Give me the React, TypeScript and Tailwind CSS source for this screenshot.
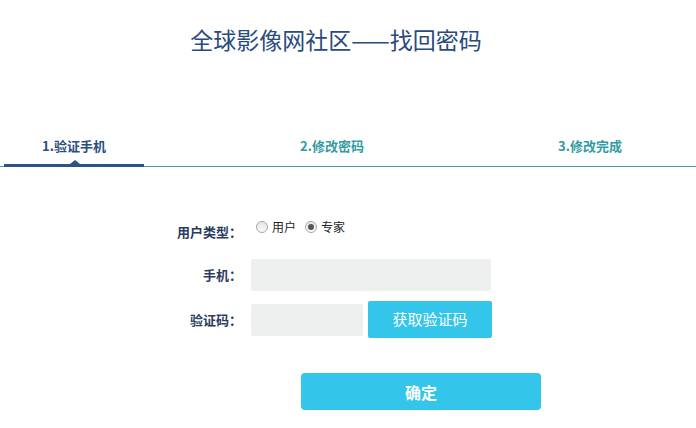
import React from "react";

const font = { fontFamily: '"Noto Sans CJK SC", "Noto Sans", sans-serif' };

function Radio({ checked }: { checked?: boolean }) {
  return (
    <span className="relative inline-flex h-[12px] w-[12px] items-center justify-center rounded-full border border-[#a6a6a6] bg-gradient-to-b from-[#e6e6e6] to-[#fafafa]">
      {checked && <span className="h-[6px] w-[6px] rounded-full bg-[#555]" />}
    </span>
  );
}

export default function App() {
  return (
    <div className="h-[428px] w-[696px] bg-white" style={font}>
      <div className="pr-[24px] pt-[24px] text-center text-[23px] leading-[30px] text-[#2b4b7c]">
        全球影像网社区——找回密码
      </div>
      <div className="mt-[82px] flex h-[31px] gap-[118px] border-b border-[#4d9aa0] pl-[4px]">
        <div className="relative flex w-[140px] justify-center">
          <span className="text-[13px] font-bold leading-[20px] text-[#2b4d7e]">1.验证手机</span>
          <span className="absolute bottom-[-1px] left-0 h-[3px] w-[140px] bg-[#2b5384]" />
          <span className="absolute bottom-[2px] left-[66px] h-0 w-0 border-x-[5px] border-b-[4px] border-x-transparent border-b-[#2b5384]" />
        </div>
        <div className="flex w-[140px] justify-center">
          <span className="text-[13px] font-bold leading-[20px] text-[#339ba3]">2.修改密码</span>
        </div>
        <div className="flex w-[140px] justify-center">
          <span className="text-[13px] font-bold leading-[20px] text-[#339ba3]">3.修改完成</span>
        </div>
      </div>
      <div className="flex flex-col pl-[150px]">
        <div className="mt-[50px] flex h-[24px] items-start">
          <div className="w-[92px] pt-[5px] text-right text-[13px] font-bold leading-[20px] text-[#2a3d60]">用户类型：</div>
          <div className="ml-[9px] flex items-center pt-[3px] text-[12px] leading-[14px] text-[#222]">
            <span className="ml-[5px] flex"><Radio /></span>
            <span className="ml-[4px]">用户</span>
            <span className="ml-[9px] flex"><Radio checked /></span>
            <span className="ml-[4px]">专家</span>
          </div>
        </div>
        <div className="mt-[18px] flex h-[32px] items-center">
          <div className="w-[92px] text-right text-[13px] font-bold leading-[20px] text-[#2a3d60]">手机：</div>
          <div className="ml-[9px] h-[32px] w-[240px] rounded-[2px] bg-[#eef0ef]" />
        </div>
        <div className="mt-[10px] flex h-[37px] items-center">
          <div className="w-[92px] text-right text-[13px] font-bold leading-[20px] text-[#2a3d60]">验证码：</div>
          <div className="ml-[9px] h-[32px] w-[112px] rounded-[2px] bg-[#eef0ef]" />
          <div className="ml-[5px] flex h-[37px] w-[124px] items-center justify-center rounded-[2px] bg-[#33c5ea] text-[15px] text-white">
            获取验证码
          </div>
        </div>
        <div className="ml-[151px] mt-[35px] flex h-[37px] w-[240px] items-center justify-center rounded-[4px] bg-[#33c5ea] text-[16px] font-bold text-white">
          确定
        </div>
      </div>
    </div>
  );
}
